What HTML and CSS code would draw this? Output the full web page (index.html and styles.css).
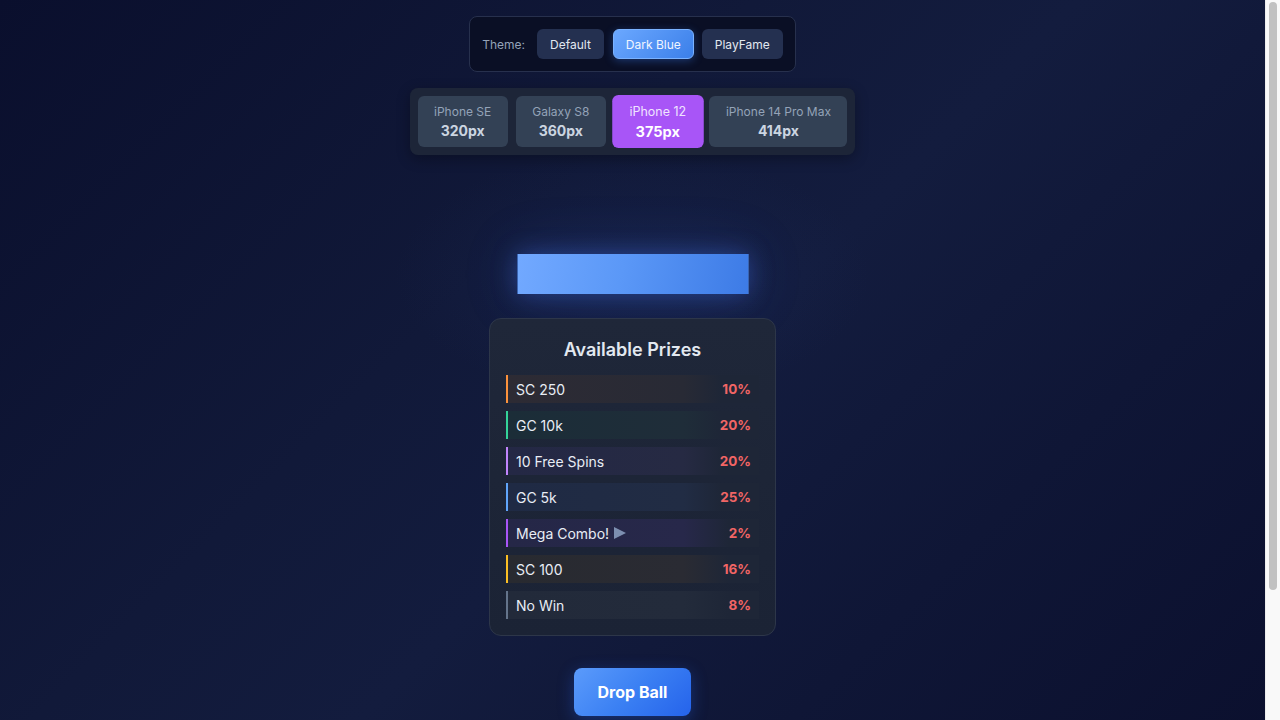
FILE: index.html
```html
<!DOCTYPE html>
<html lang="en">
<head>
<meta charset="utf-8">
<title>Plinko Prizes</title>
<link rel="stylesheet" href="styles.css">
</head>
<body>
<main class="page">
  <div class="theme-bar">
    <span class="theme-label">Theme:</span>
    <button class="theme-btn">Default</button>
    <button class="theme-btn active">Dark Blue</button>
    <button class="theme-btn">PlayFame</button>
  </div>

  <div class="device-bar">
    <button class="device-btn"><span class="dev-name">iPhone SE</span><span class="dev-px">320px</span></button>
    <button class="device-btn"><span class="dev-name">Galaxy S8</span><span class="dev-px">360px</span></button>
    <button class="device-btn active"><span class="dev-name">iPhone 12</span><span class="dev-px">375px</span></button>
    <button class="device-btn"><span class="dev-name">iPhone 14 Pro Max</span><span class="dev-px">414px</span></button>
  </div>

  <div class="board">
    <div class="bar"></div>
  </div>

  <section class="prizes">
    <h2 class="prizes-title">Available Prizes</h2>
    <ul class="prize-list">
      <li class="prize orange"><span class="p-name">SC 250</span><span class="p-pct">10%</span></li>
      <li class="prize green"><span class="p-name">GC 10k</span><span class="p-pct">20%</span></li>
      <li class="prize lilac"><span class="p-name">10 Free Spins</span><span class="p-pct">20%</span></li>
      <li class="prize blue"><span class="p-name">GC 5k</span><span class="p-pct">25%</span></li>
      <li class="prize purple"><span class="p-name">Mega Combo! <span class="tri"></span></span><span class="p-pct">2%</span></li>
      <li class="prize yellow"><span class="p-name">SC 100</span><span class="p-pct">16%</span></li>
      <li class="prize gray"><span class="p-name">No Win</span><span class="p-pct">8%</span></li>
    </ul>
  </section>

  <button class="drop-btn">Drop Ball</button>
</main>
<div class="scrollbar" aria-hidden="true"><div class="scroll-thumb"></div></div>
</body>
</html>
```

FILE: styles.css
```css
* { box-sizing: border-box; }

html {
  background: #0c1130;
}

body {
  margin: 0;
  padding-right: 15px;
  min-height: 878px;
  font-family: Inter, "Noto Sans", "Liberation Sans", sans-serif;
  color: #e2e8f0;
  background:
    radial-gradient(ellipse 340px 180px at 49.4% 275px, rgba(35, 55, 110, 0.22), transparent 70%),
    linear-gradient(135deg, #0a0f2d 0%, #111939 35%, #131c3e 50%, #0f1636 70%, #0a0e2c 100%);
}

/* fake browser scrollbar (overlay on the right edge) */
.scrollbar {
  position: fixed;
  top: 0;
  right: 0;
  width: 15px;
  height: 100vh;
  background: #f9f9f9;
  border-left: 1px solid #ededed;
}

.scroll-thumb {
  margin: 2px 0 0 3px;
  width: 8px;
  height: 588px;
  background: #c1c1c1;
  border-radius: 4px;
}

.page {
  display: flex;
  flex-direction: column;
  align-items: center;
  padding: 16px 0 162px;
}

button {
  font-family: inherit;
  cursor: pointer;
}

/* Theme switcher */
.theme-bar {
  display: flex;
  align-items: center;
  gap: 8px;
  height: 56px;
  padding: 0 12px;
  background: #0a0f25;
  border: 1px solid #27304d;
  border-radius: 8px;
}

.theme-label {
  font-size: 12px;
  color: #94a3b8;
  margin-right: 4px;
}

.theme-btn {
  height: 30px;
  padding: 0 12px;
  border: 1px solid transparent;
  border-radius: 6px;
  background: #243050;
  color: #e2e8f0;
  font-size: 12px;
}

.theme-btn.active {
  margin-left: 1px;
  background: linear-gradient(135deg, #6ba8ff, #3b7fe9);
  border-color: #7ab2ff;
  color: #f1f5ff;
  box-shadow: 0 2px 8px rgba(59, 130, 246, 0.35);
}

/* Device switcher */
.device-bar {
  display: flex;
  align-items: center;
  gap: 8px;
  margin-top: 16px;
  padding: 8px;
  background: #1d2538;
  border-radius: 8px;
  box-shadow: 0 4px 14px rgba(0, 0, 0, 0.3);
}

.device-btn {
  display: flex;
  flex-direction: column;
  align-items: center;
  justify-content: center;
  gap: 1px;
  height: 51px;
  padding: 2px 16.5px 0;
  border: none;
  border-radius: 6px;
  background: #334155;
  white-space: nowrap;
}

.dev-name {
  font-size: 12px;
  line-height: 16px;
  color: #94a3b8;
}

.dev-px {
  font-size: 14px;
  line-height: 20px;
  font-weight: 700;
  color: #cbd5e1;
}

.device-btn.active {
  background: #a855f7;
  transform: scale(1.04);
}

.device-btn.active .dev-name { color: #f0e4ff; }
.device-btn.active .dev-px { color: #ffffff; }

/* Board */
.board {
  display: flex;
  justify-content: center;
  padding-top: 99px;
}

.bar {
  width: 232px;
  height: 40px;
  background: linear-gradient(100deg, #72a9ff 0%, #5b98f7 45%, #3d7be6 100%);
  border-left: 1px solid #3a64b0;
  border-right: 1px solid #3a64b0;
  box-shadow: 0 0 24px rgba(70, 120, 240, 0.4), 0 0 60px rgba(60, 100, 220, 0.18);
}

/* Prizes */
.prizes {
  width: 287px;
  margin-top: 24px;
  padding: 20px 16px 16px;
  background: linear-gradient(180deg, #1f2739 0%, #1b2335 100%);
  border: 1px solid #2d3649;
  border-radius: 12px;
}

.prizes-title {
  margin: 0 0 14px;
  text-align: center;
  font-size: 18px;
  font-weight: 600;
  color: #e2e8f0;
  line-height: 22px;
}

.prize-list {
  list-style: none;
  margin: 0;
  padding: 0;
  display: flex;
  flex-direction: column;
  gap: 8px;
}

.prize {
  display: flex;
  justify-content: space-between;
  align-items: center;
  height: 28px;
  padding: 0 8px;
  border-left: 2px solid;
  font-size: 14px;
}

.p-name {
  color: #e8edf5;
  display: flex;
  align-items: center;
  gap: 5px;
}

.p-pct {
  color: #f16565;
  font-size: 13.5px;
  font-weight: 700;
}

.tri {
  width: 0;
  height: 0;
  border-top: 6px solid transparent;
  border-bottom: 6px solid transparent;
  border-left: 12px solid #7d8fb0;
}

.orange { border-color: #fb923c; background: linear-gradient(90deg, #2d2b34 0%, #282a35 70%, #1e2637 85%); }
.green  { border-color: #34d399; background: linear-gradient(90deg, #1b2d38 0%, #1f2d39 70%, #1e2637 85%); }
.lilac  { border-color: #c084fc; background: linear-gradient(90deg, #242845 0%, #262a43 70%, #1e2637 85%); }
.blue   { border-color: #60a5fa; background: linear-gradient(90deg, #1f2a44 0%, #212c44 70%, #1e2637 85%); }
.purple { border-color: #a855f7; background: linear-gradient(90deg, #252747 0%, #27284a 70%, #1e2637 88%); }
.yellow { border-color: #fbbf24; background: linear-gradient(90deg, #282a30 0%, #2a2b33 70%, #1e2637 88%); }
.gray   { border-color: #64748b; background: linear-gradient(90deg, #222a3a 0%, #232b3b 70%, #1e2637 88%); }

/* Drop button */
.drop-btn {
  margin-top: 32px;
  width: 117px;
  height: 48px;
  border: none;
  border-radius: 8px;
  background: linear-gradient(135deg, #5b9bfb 0%, #3b80f3 50%, #2563eb 100%);
  color: #ffffff;
  font-size: 16px;
  font-weight: 700;
  box-shadow: 0 4px 16px rgba(37, 99, 235, 0.35);
}
```
